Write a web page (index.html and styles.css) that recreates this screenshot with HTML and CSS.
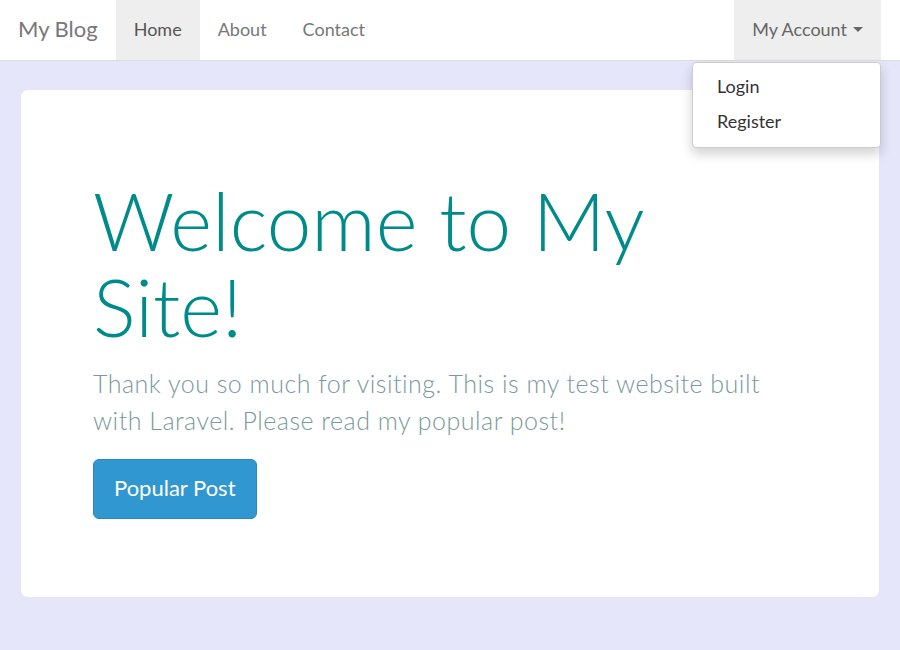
FILE: index.html
```html
<!DOCTYPE html>
<html>
<head>
<meta charset="utf-8">
<link rel="stylesheet" href="styles.css">
</head>
<body>
<nav class="navbar">
  <a class="brand" href="#">My Blog</a>
  <ul class="nav">
    <li class="active"><a href="#">Home</a></li>
    <li><a href="#">About</a></li>
    <li><a href="#">Contact</a></li>
  </ul>
  <div class="account">
    <a class="account-toggle" href="#">My Account <span class="caret"></span></a>
    <ul class="dropdown">
      <li><a href="#">Login</a></li>
      <li><a href="#">Register</a></li>
    </ul>
  </div>
</nav>
<main class="jumbotron">
  <h1 class="title">Welcome to My Site!</h1>
  <p class="lead">Thank you so much for visiting. This is my test website built with Laravel. Please read my popular post!</p>
  <a class="btn" href="#">Popular Post</a>
</main>
</body>
</html>
```
FILE: styles.css
```css
* { box-sizing: border-box; }
html, body { margin: 0; padding: 0; }
body {
  background: #e6e6fa;
  font-family: Lato, "Open Sans", sans-serif;
  color: #777;
  height: 650px;
  overflow: hidden;
}
a { text-decoration: none; color: inherit; }
ul { list-style: none; margin: 0; padding: 0; }

.navbar {
  height: 61px;
  background: #fff;
  border-bottom: 1px solid #ddd;
  display: flex;
  align-items: stretch;
  padding: 0 19px 0 0;
  position: relative;
}
.brand {
  display: flex;
  align-items: center;
  padding: 0 18px 3px;
  font-size: 22px;
  color: #777;
  font-weight: 400;
}
.nav { display: flex; }
.nav li a {
  display: flex;
  align-items: center;
  height: 60px;
  padding: 0 18px 3px;
  font-size: 18px;
  color: #777;
}
.nav li.active a { background: #eee; color: #555; }

.account { margin-left: auto; position: relative; }
.account-toggle {
  display: flex;
  align-items: center;
  height: 60px;
  padding: 0 18px 3px;
  background: #eee;
  font-size: 18px;
  color: #666;
  gap: 6px;
}
.caret {
  width: 0; height: 0;
  border-left: 5px solid transparent;
  border-right: 5px solid transparent;
  border-top: 5px solid #666;
  margin-top: 2px;
}
.dropdown {
  position: absolute;
  top: 62px;
  right: 0;
  width: 189px;
  background: #fff;
  border: 1px solid #ccc;
  border-radius: 4px;
  box-shadow: 0 6px 12px rgba(0,0,0,0.18);
  padding: 6px 0 8px;
  z-index: 10;
}
.dropdown li a {
  display: block;
  padding: 5px 24px;
  font-size: 18px;
  line-height: 25px;
  color: #333;
}

.jumbotron {
  margin: 29px 21px 0;
  height: 507px;
  background: #fff;
  border-radius: 7px;
  padding: 87px 72px 0;
}
.title {
  margin: 0;
  font-size: 80px;
  font-weight: 300;
  line-height: 86px;
  color: #008b8b;
  max-width: 620px;
}
.lead {
  margin: 16px 0 20px;
  font-size: 25px;
  font-weight: 300;
  line-height: 37px;
  letter-spacing: 0.5px;
  color: #7a9a99;
  max-width: 690px;
}
.btn {
  display: inline-block;
  background: #3097d1;
  color: #fff;
  font-size: 22px;
  line-height: 56px;
  padding: 0 20px 2px;
  border: 1px solid #2a88bd;
  border-radius: 6px;
}
```
